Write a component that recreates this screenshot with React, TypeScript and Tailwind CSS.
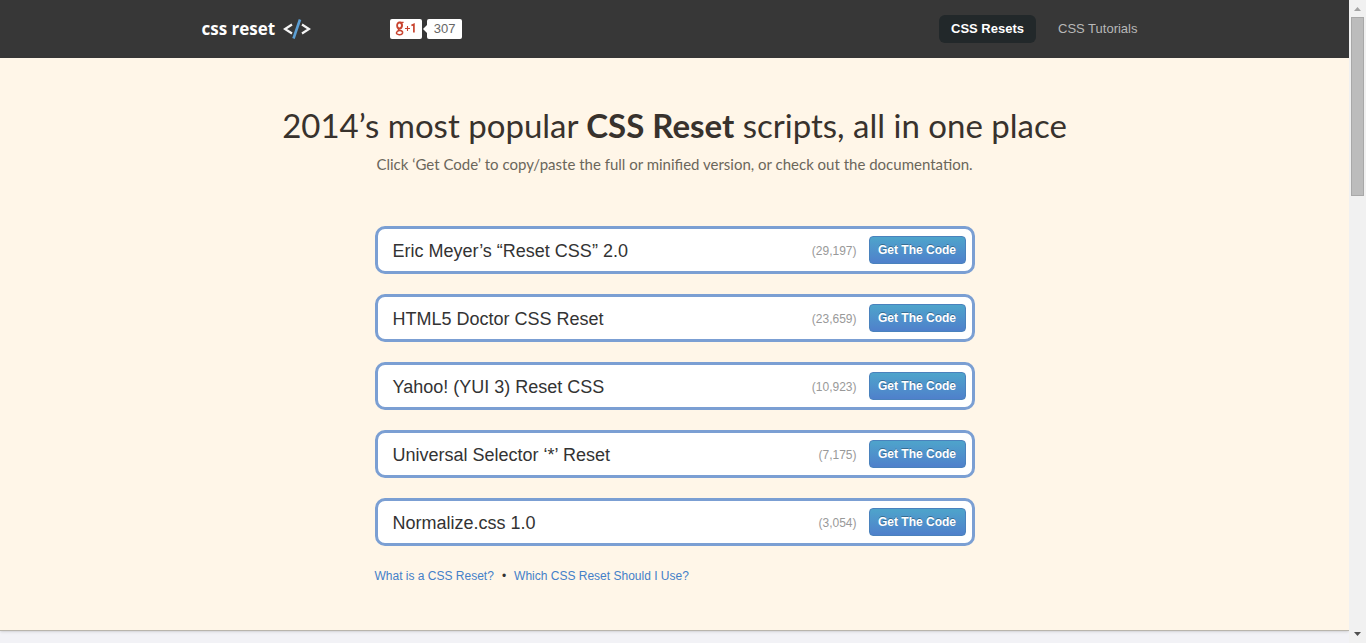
const NAV_ITEMS = [
  { href: '#resets', label: 'CSS Resets', active: true },
  { href: '#tutorials', label: 'CSS Tutorials', active: false },
]

const RESETS = [
  { name: 'Eric Meyer’s “Reset CSS” 2.0', count: '29,197' },
  { name: 'HTML5 Doctor CSS Reset', count: '23,659' },
  { name: 'Yahoo! (YUI 3) Reset CSS', count: '10,923' },
  { name: 'Universal Selector ‘*’ Reset', count: '7,175' },
  { name: 'Normalize.css 1.0', count: '3,054' },
]

function CodeMark() {
  return (
    <svg width="28" height="20" viewBox="0 0 28 20" fill="none" strokeWidth="2.2" aria-hidden="true">
      <path d="M9 5.5 L2 10 L9 14.5" stroke="#f4f4f4" />
      <path d="M19 5.5 L26 10 L19 14.5" stroke="#f4f4f4" />
      <path d="M17 .5 L10.5 19.5" stroke="#5c9fd4" strokeWidth="2.6" />
    </svg>
  )
}

function PlusOne() {
  return (
    <div className="flex items-center">
      <button
        type="button"
        aria-label="+1"
        className="flex h-5 w-8 items-center justify-center rounded-[2px] bg-white"
      >
        <svg width="22" height="16" viewBox="0 0 22 16" fill="none" stroke="#c8432f" aria-hidden="true">
          <ellipse cx="4.5" cy="4.5" rx="2.4" ry="3" strokeWidth="1.8" />
          <path d="M4.5 1.4 H8.6 M6.5 2 Q8.2 4.4 6 6.6" strokeWidth="1.2" />
          <path d="M4 7.7 Q2.7 8.7 4.6 9.3 Q8 10 7.6 12 Q7 13.9 4.2 13.7 Q1.2 13.4 1.5 11.6 Q2 9.8 4.6 9.5" strokeWidth="1.5" />
          <path d="M10 7.5 H15 M12.5 5 V10" strokeWidth="1.1" />
          <path d="M16.4 4.6 L18.9 3.4 V11.5" strokeWidth="1.7" />
        </svg>
      </button>
      <svg width="4" height="8" viewBox="0 0 4 8" className="ml-px" aria-hidden="true">
        <path d="M4 0 L0 4 L4 8 Z" fill="#fff" />
      </svg>
      <span className="flex h-5 w-[35px] items-center justify-center rounded-[2px] bg-white text-[13px] text-[#666]">
        307
      </span>
    </div>
  )
}

function Header() {
  return (
    <header className="bg-[#373737]">
      <div className="mx-auto flex h-[58px] max-w-[950px] items-center pl-0.5">
        <a
          href="#home"
          className="flex items-center gap-2 font-['Open_Sans',sans-serif] text-[17px] font-bold text-white"
        >
          css reset
          <CodeMark />
        </a>
        <div className="ml-[79px]">
          <PlusOne />
        </div>
        <nav className="ml-auto flex gap-2.5">
          {NAV_ITEMS.map((item) => (
            <a
              key={item.href}
              href={item.href}
              aria-current={item.active ? 'page' : undefined}
              className={
                item.active
                  ? 'rounded-md bg-[#22282a] px-3 text-[13px] leading-7 font-bold text-white'
                  : 'rounded-md px-3 text-[13px] leading-7 text-[#b8b8b8]'
              }
            >
              {item.label}
            </a>
          ))}
        </nav>
      </div>
    </header>
  )
}

function ScrollRail() {
  return (
    <aside className="flex w-[17px] flex-col items-center bg-[#f1f1f1]" aria-hidden="true">
      <svg width="17" height="17" viewBox="0 0 17 17">
        <path d="M5 11 L8.5 7 L12 11 Z" fill="#a3a3a3" />
      </svg>
      <div className="h-[179px] w-[13px] border border-[#a8a8a8] bg-[#bcbcbc]" />
      <svg width="17" height="17" viewBox="0 0 17 17" className="mt-auto">
        <path d="M5 6 L8.5 10 L12 6 Z" fill="#505050" />
      </svg>
    </aside>
  )
}

export default function App() {
  return (
    <div className="flex min-h-screen font-['Liberation_Sans',Arial,sans-serif]">
      <div className="flex flex-1 flex-col bg-[#f2f2f6]">
        <Header />
        <main className="border-b border-[#b9b5ac] bg-[#fff6e8] pt-11 pb-11 shadow-sm">
          <div className="text-center font-[Lato,sans-serif]">
            <h1 className="text-[33px] leading-[46px] text-[#38322d]">
              2014’s most popular <strong>CSS Reset</strong> scripts, all in one place
            </h1>
            <p className="mt-1 text-[15px] leading-6 text-[#6b665b]">
              Click ‘Get Code’ to copy/paste the full or minified version, or check out the documentation.
            </p>
          </div>

          <div className="mx-auto mt-[50px] max-w-[600px]">
            <ul className="flex flex-col gap-5">
              {RESETS.map((reset) => (
                <li
                  key={reset.name}
                  className="flex h-12 items-center rounded-[10px] border-3 border-[#7b9fd3] bg-white pr-1.5 pl-[15px]"
                >
                  <h2 className="flex-1 pt-0.5 text-lg text-[#333]">{reset.name}</h2>
                  <span className="mr-3 pt-0.5 text-xs text-[#999]">({reset.count})</span>
                  <button
                    type="button"
                    className="h-7 w-[97px] rounded-[4px] border border-[#4a82bd] bg-linear-to-b from-[#4ea4cb] to-[#4f80cb] text-xs font-bold text-white text-shadow-[0_-1px_0_#0000004d]"
                  >
                    Get The Code
                  </button>
                </li>
              ))}
            </ul>
            <p className="mt-5 text-xs leading-5 text-[#333]">
              <a href="#what" className="text-[#4480c8]">What is a CSS Reset?</a>
              <span className="mx-2">•</span>
              <a href="#which" className="text-[#4480c8]">Which CSS Reset Should I Use?</a>
            </p>
          </div>
        </main>
      </div>
      <ScrollRail />
    </div>
  )
}
